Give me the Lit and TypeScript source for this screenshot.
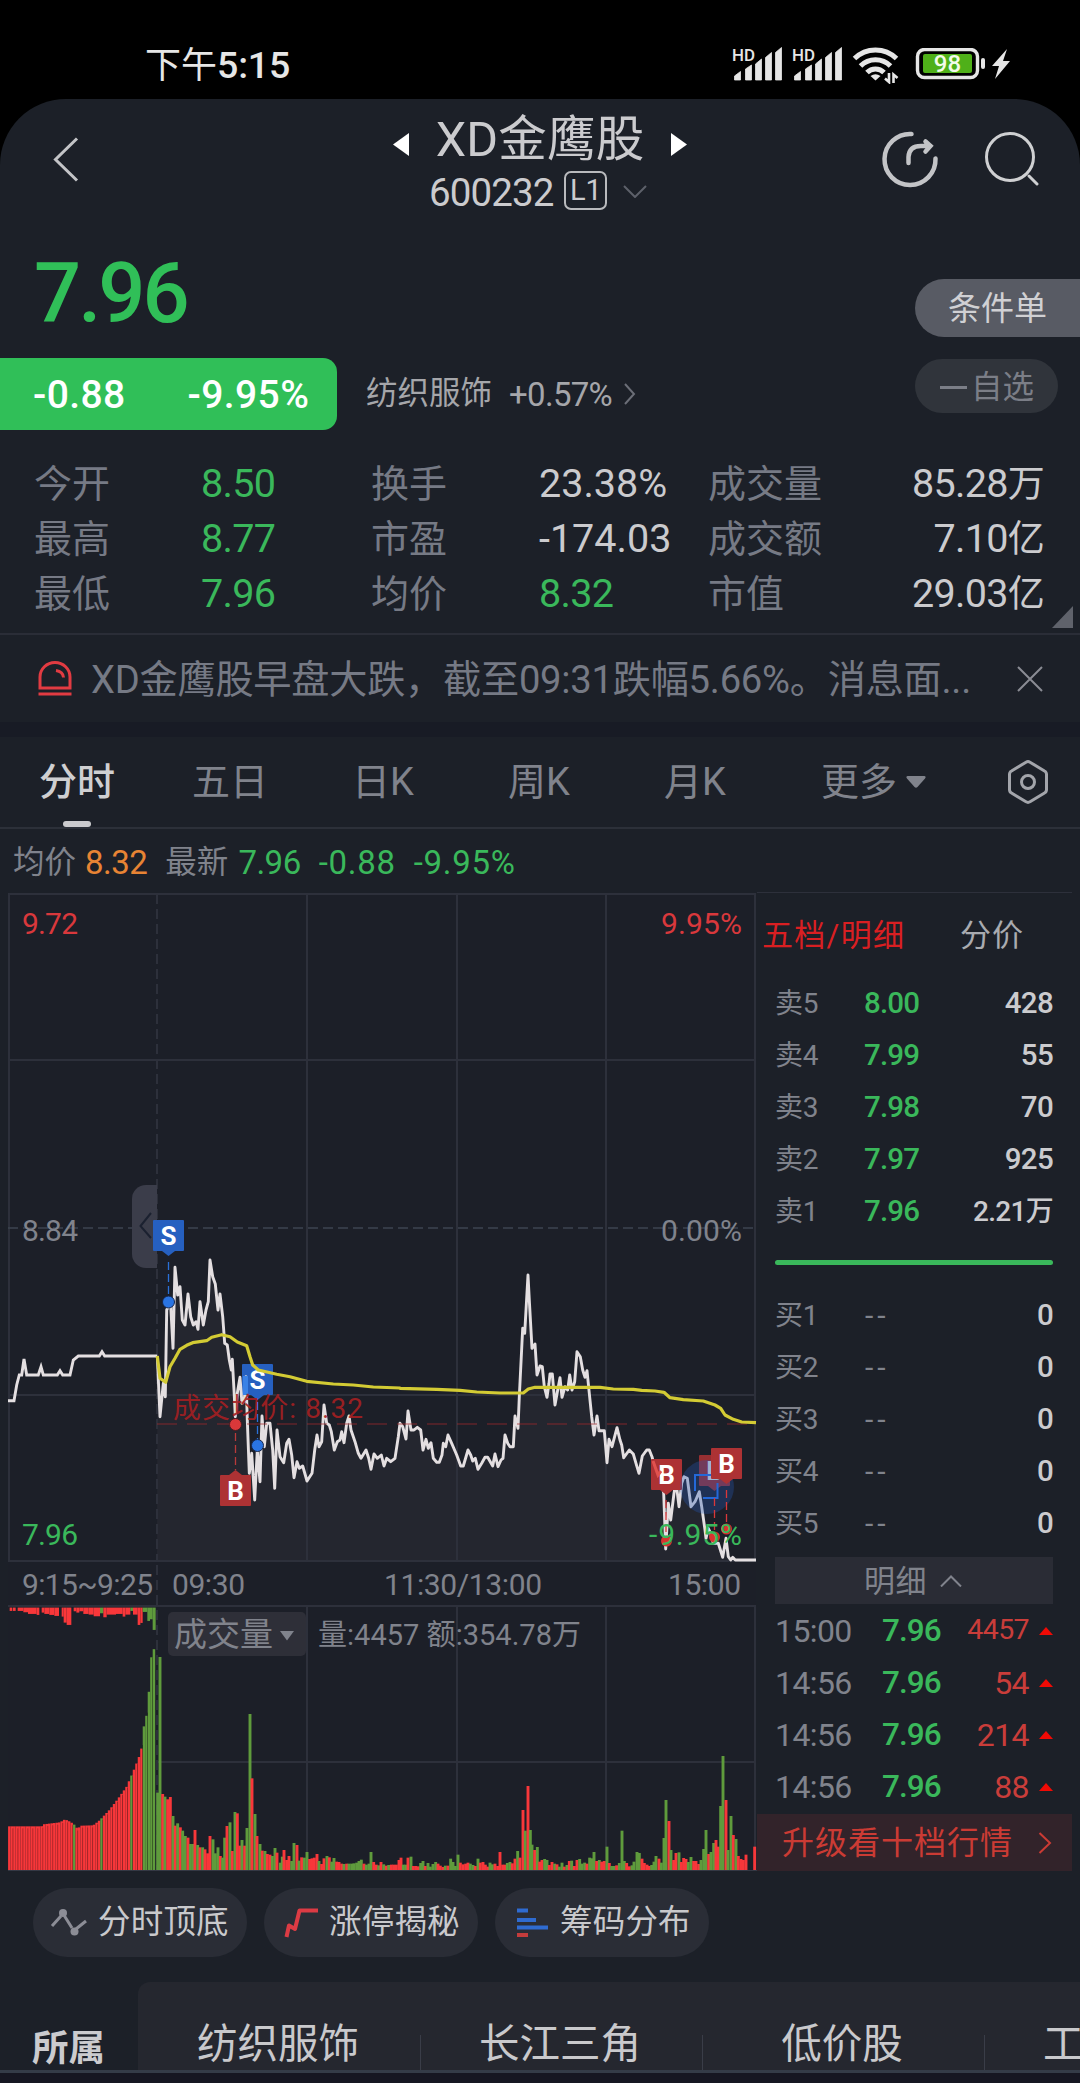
import { LitElement, html, svg, css } from "lit";
import { customElement, property } from "lit/decorators.js";

type Bar = { x: number; y: number; c: string };

const RED = "#f8373a";
const GREEN = "#5f9b3c";

// Traces are kept on a 3x grid; the second half starts at x = 1200.
const PRICE_A =
  "24,812 42,812 50,765 58,735 65,735 72,687 80,735 115,735 123,710 130,735 172,735 180,722 188,735 210,735 220,690 235,678 298,678 306,665 314,678 472,678";
const PRICE_B =
  "472,678 480,860 490,760 496,800 500,540 505,530 512,525 519,655 525,412 533,495 540,470 547,570 555,585 564,492 572,560 580,585 588,575 594,598 600,515 610,585 618,540 625,515 630,390 638,440 646,462 654,540 660,492 668,560 674,640 682,645 688,690 694,720 697,688 702,780 706,860 712,790 720,742 726,820 733,810 738,740 742,870 748,1030 755,970 764,1110 772,960 780,1055 786,858 793,950 800,880 810,880 818,960 824,1075 831,900 840,980 851,998 860,940 867,928 875,975 882,1043 891,995 898,1015 908,1008 921,1053 936,1030 944,960 951,915 957,950 965,935 972,825 980,880 988,885 994,905 1003,960 1012,935 1020,930 1025,905 1032,938 1040,880 1047,858 1053,900 1065,935 1075,970 1083,985 1098,960 1106,985 1113,1018 1122,972 1132,985 1144,975 1152,1008 1160,985 1172,995 1185,985 1195,920 1200,880";
const PRICE_C =
  "0,670 8,680 18,717 24,633 33,690 42,690 52,682 62,690 69,750 78,718 85,745 93,728 100,775 110,787 118,787 126,765 130,730 137,740 144,705 155,730 170,765 182,798 190,798 204,750 212,765 218,783 226,775 234,808 245,790 255,772 263,772 278,798 285,762 294,800 303,780 309,775 315,705 323,730 330,740 340,740 345,648 354,685 358,590 368,385 374,400 384,225 388,300 396,445 405,432 411,525 420,498 427,500 433,560 441,592 447,550 450,522 457,522 465,615 473,570 480,533 486,592 495,560 503,570 509,525 516,570 524,545 531,455 541,470 548,510 555,532 561,512 568,580 575,650 582,705 591,648 597,692 613,692 621,788 627,718 636,740 651,683 660,720 665,735 671,773 688,750 700,762 708,790 717,820 727,768 740,750 748,750 756,770 768,820 775,810 785,850 791,880 797,1047 805,910 812,960 822,880 828,845 837,920 845,850 852,830 862,835 873,920 885,905 898,875 905,920 915,990 918,1015 925,985 932,1000 940,1030 955,1030 968,1072 978,1015 985,1070 992,1080 998,1072 1006,1080 1068,1080";
const AVG_A =
  "472,678 480,745 497,757 510,710 525,685 540,658 560,646 578,638 620,632 635,622 665,614 690,620 712,636 740,647 750,680 758,705 775,720 830,733 870,740 920,754 1000,762 1060,765 1120,771 1200,774";
const AVG_B =
  "0,565 110,568 180,571 230,576 300,579 370,579 385,567 405,562 600,562 640,567 700,568 725,571 765,573 792,577 810,593 850,599 910,603 945,615 962,625 975,645 1000,658 1025,666 1068,668";

const toPoints = (s: string, ox: number, oy: number) =>
  s.split(" ").map((p) => {
    const [x, y] = p.split(",").map(Number);
    return [ox + x / 3, oy + y / 3];
  });
const join = (pts: number[][]) => pts.map(([x, y]) => `${x.toFixed(1)},${y.toFixed(1)}`).join(" ");

const auctionLine = join(toPoints(PRICE_A, 0, 1130));
const dayPts = [...toPoints(PRICE_B, 0, 1130), ...toPoints(PRICE_C, 400, 1200)];
const dayLine = join(dayPts);
const dayArea = `157,1560 ${dayLine} 756,1560`;
const avgLine = join([...toPoints(AVG_A, 0, 1130), ...toPoints(AVG_B, 400, 1200)]);

const VOL_A =
  "473g698 480g291 488r702 495g710 503r718 511r711 519g768 526r797 533g790 541r802 548g812 556g828 564r833 571g852 578g852 585r810 593g855 600r862 608g862 615r868 623r880 630r828 639g838 646g880 654g862 661r888 668g893 674g833 681r798 690g787 697r873 705g756 712r760 719r857 726g840 734r857 741g804 750g462 756r655 765g762 771r828 780g852 787r872 795g873 802r882 810r884 817g888 825g864 831r878 841g908 847g890 852r870 860r900 867r888 875g903 882g849 891r855 897g902 905r892 913g893 921g876 929r897 936r895 943r893 951r882 957g903 965r912 972r895 981g888 988r892 995g905 1002g894 1010r905 1017r906 1025r911 1032g912 1040r911 1047g911 1055g911 1062g910 1070g908 1077g903 1084g899 1092r911 1099g914 1107g911 1113g876 1121r906 1129r914 1136g916 1143r906 1151g913 1159r917 1166g915 1174r914 1181r914 1189r914 1197r900";
const VOL_B =
  "63r893 70g914 77g914 84r893 93g890 100r918 107r918 115r919 122g909 129g903 136r918 144g909 151g920 159g912 167g906 174r911 181r917 189r921 196g917 204r917 212g896 219g906 226g918 234g884 241r908 249r913 257r911 264r908 271g911 279g915 286r918 294g896 301r908 309r906 316r914 323r920 330g908 337g913 345r911 353r918 360r876 368r914 375r914 382g909 390g906 397r910 405r896 413g873 420r893 429r750 436g812 444r678 451g810 456g854 464r870 472g861 479r905 486r900 494g897 501g900 508r915 516r906 524g911 531r913 538g920 546g908 553r920 561g915 568r903 575g902 583r918 591r900 599g897 606g911 614g908 621r911 629g893 636g895 642g876 650r903 658g900 665r905 673r903 681g860 688r909 695g918 703g918 710r916 718g909 726g812 733g903 740r909 748r919 756g916 762g905 771g876 778g879 786r896 793r909 801r914 808r918 815g915 822g905 828g888 837r896 844g908 852g834 858g720 867r783 873g870 881r900 888r879 897g877 904r906 911r894 918r897 925g906 933g891 941r903 948r903 956r912 963g900 971g867 978g810 986r882 993g876 1001g849 1008r840 1015r860 1022g738 1029g588 1038r720 1044g870 1053g768 1060r825 1068g837 1075r888 1083r897 1090r900 1098r884 1124r860";

const parseBars = (s: string, ox: number): Bar[] =>
  s.split(" ").map((t) => {
    const m = /^(\d+)([rg])(\d+)$/.exec(t)!;
    return { x: ox + +m[1] / 3, y: 1560 + +m[3] / 3, c: m[2] === "r" ? RED : GREEN };
  });
const dayBars = [...parseBars(VOL_A, 0), ...parseBars(VOL_B, 380)];

// Call auction: matched volume rises toward the open.
const RISE = [
  [24, 799], [125, 799], [130, 793], [180, 787], [195, 778], [212, 786], [224, 795], [232, 806], [245, 797],
  [280, 796], [300, 780], [330, 748], [355, 715], [380, 680], [400, 634], [415, 597], [424, 570], [431, 502],
  [438, 480], [446, 408], [454, 293], [462, 267],
];
const riseAt = (x: number) => {
  for (let i = 1; i < RISE.length; i++) {
    const [x0, y0] = RISE[i - 1];
    const [x1, y1] = RISE[i];
    if (x <= x1) return y0 + ((y1 - y0) * (x - x0)) / (x1 - x0);
  }
  return 267;
};
const auctionBars: Bar[] = Array.from({ length: 59 }, (_, i) => {
  const x = 28 + i * 7.48;
  const green = x > 428 || [26, 37, 49].includes(i);
  return { x: x / 3, y: 1560 + riseAt(x) / 3, c: green ? GREEN : RED };
});
// Unmatched volume hangs from the top edge: start, end, depth, colour.
const HANG: [number, number, number, string][] = [
  [29, 37, 153, RED], [39, 47, 153, RED], [53, 70, 153, RED], [70, 84, 157, RED], [84, 110, 162, RED],
  [110, 118, 165, RED], [125, 133, 158, RED], [133, 148, 162, RED], [148, 163, 165, RED], [163, 177, 168, RED],
  [185, 191, 170, RED], [191, 200, 188, RED], [200, 214, 195, RED], [221, 229, 154, RED], [229, 238, 158, RED],
  [238, 250, 154, RED], [250, 266, 162, RED], [266, 281, 164, RED], [281, 300, 169, RED], [300, 310, 160, GREEN],
  [310, 320, 172, RED], [320, 348, 164, RED], [348, 368, 162, RED], [368, 376, 170, RED], [376, 391, 164, RED],
  [391, 399, 153, GREEN], [399, 413, 164, RED], [413, 421, 195, RED], [421, 428, 189, RED], [428, 442, 156, GREEN],
  [442, 450, 183, GREEN], [450, 458, 178, GREEN], [458, 467, 210, GREEN],
];

@customElement("quote-chart")
export class QuoteChart extends LitElement {
  static styles = css`
    :host { display: block; width: 757px; height: 979px; }
    svg { display: block; font-family: Roboto, "Noto Sans CJK SC", sans-serif; }
    .grid { stroke: #2d303b; stroke-width: 2; fill: none; }
    .lab { fill: #80838c; font-size: 30px; }
    .lab.kind { font-size: 33px; }
    .lab.sum { font-size: 29px; }
    .red { fill: #d9383c; }
    .green { fill: #3ab85b; }
    .tag { fill: #fff; font-size: 26px; font-weight: 700; text-anchor: middle; }
  `;

  private flag(x: number, y: number, letter: string, up = false) {
    const color = letter === "S" ? "#2660c0" : "#ad3234";
    return svg`
      <rect x=${x} y=${y} width="31" height="31" rx="1" fill=${color}></rect>
      <path d=${up ? `M${x + 9} ${y}l6.5 -5l6.5 5z` : `M${x + 9} ${y + 31}l6.5 5l6.5 -5z`} fill=${color}></path>
      <text class="tag" x=${x + 15.5} y=${y + 25}>${letter}</text>`;
  }

  private stem(x: number, y1: number, y2: number, color: string) {
    return svg`<path d="M${x} ${y1}V${y2}" stroke=${color} stroke-width="1.3" stroke-dasharray="8 4"></path>`;
  }

  render() {
    return html`<svg width="757" height="979" viewBox="0 892 757 979">
      <rect x="8" y="893" width="748" height="978" fill="#1c1f28"></rect>
      <polygon points=${dayArea} fill="#24262f"></polygon>
      <path class="grid" d="M8 894H756M8 1060H756M8 1395H756M8 1561H756M9 893V1561M307 893V1562M457 893V1562M606 893V1562M755 893V1561"></path>
      <path class="grid" d="M8 1606H756M157 1762H756M307 1606V1870M457 1606V1870M606 1606V1870M755 1606V1870"></path>
      <path class="grid" stroke-dasharray="10 5" d="M157 894V1562M157 1565V1870"></path>
      <path d="M8 1228H756" stroke="#3d4450" stroke-width="1.6" stroke-dasharray="10 5" fill="none"></path>
      <path d="M8 1870.5H757" stroke="#343844" stroke-width="1"></path>

      <path d="M157 1185H146a14 14 0 0 0 -14 14V1254a14 14 0 0 0 14 14H157z" fill="#3b3d4a"></path>
      <path d="M151 1213L140.500 1226L151 1238" fill="none" stroke="#1b2130" stroke-width="2"></path>

      <text class="lab red" x="22" y="934" textLength="56">9.72</text>
      <text class="lab red" x="661" y="934" textLength="81">9.95%</text>
      <text class="lab" x="22" y="1241" textLength="56">8.84</text>
      <text class="lab" x="661" y="1241" textLength="81">0.00%</text>
      <text class="lab green" x="22" y="1545" textLength="56">7.96</text>

      <polyline points=${auctionLine} fill="none" stroke="#e4dfe1" stroke-width="2.9"></polyline>
      ${this.flag(153, 1220, "S")}
      ${this.flag(242, 1364, "S")}
      <polyline points=${dayLine} fill="none" stroke="#e4dfe1" stroke-width="2.9" stroke-linejoin="round"></polyline>
      <rect x="243" y="1376" width="5" height="19" fill="#3b82e6"></rect>

      ${this.stem(168.5, 1262, 1298, "#2a70d8")}
      ${this.stem(257.5, 1402, 1440, "#2a70d8")}
      ${this.stem(235.5, 1433, 1470, "#b83a3a")}
      ${this.flag(220, 1475, "B", true)}
      <path d="M157 1424H756" stroke="#a3282c" stroke-opacity="0.5" stroke-width="1.6" stroke-dasharray="20 10"></path>
      <text x="173" y="1418" font-size="28" textLength="190" fill="#a51f22" fill-opacity="0.92">成交均价: 8.32</text>
      <polyline points=${avgLine} fill="none" stroke="#d3cb34" stroke-width="3.2" stroke-linejoin="round"></polyline>
      <circle cx="168.500" cy="1302" r="6" fill="#2a74e2" stroke="#15254a"></circle>
      <circle cx="257.500" cy="1445.500" r="6" fill="#2a74e2" stroke="#15254a"></circle>
      <circle cx="235.500" cy="1424.500" r="6" fill="#d9383a" stroke="#4a1a20"></circle>

      <g opacity="0.85">${this.flag(699, 1455, "B")}</g>
      ${this.flag(651, 1459, "B")}
      <path d="M653 1461l5 14l3 -4" stroke="#e0524f" stroke-width="3" fill="none"></path>
      <circle cx="707" cy="1487" r="27" fill="#2458b4" fill-opacity="0.32"></circle>
      ${this.flag(711, 1448, "B")}
      <path d="M695 1491V1475H711M703 1498H717.500V1483" fill="none" stroke="#2468d8" stroke-width="2"></path>
      ${this.stem(666, 1500, 1536, "#d9383a")}
      ${this.stem(714.5, 1498, 1532, "#d9383a")}
      ${this.stem(726.5, 1490, 1524, "#d9383a")}
      <circle cx="666.500" cy="1541" r="5.500" fill="#d9322f"></circle>
      <circle cx="714.500" cy="1537" r="5.500" fill="#d9322f"></circle>
      <circle cx="726.500" cy="1529" r="5.500" fill="#d9322f"></circle>
      <text class="lab green" x="649" y="1545" textLength="93">-9.95%</text>

      <text class="lab" x="22" y="1595" textLength="131">9:15~9:25</text>
      <text class="lab" x="172" y="1595" textLength="73">09:30</text>
      <text class="lab" x="384" y="1595" textLength="158">11:30/13:00</text>
      <text class="lab" x="668" y="1595" textLength="73">15:00</text>

      ${HANG.map(([a, b, d, c]) => svg`<rect x=${a / 3} y="1607.600" width=${(b - a) / 3} height=${(d - 143) / 3} fill=${c}></rect>`)}
      ${auctionBars.map((b) => svg`<rect x=${b.x - 1.25} y=${b.y} width="2.500" height=${1870 - b.y} fill=${b.c}></rect>`)}
      ${Array.from({ length: 29 }, (_, i) => svg`<rect x=${12.4 + i * 4.987} y=${1562 + riseAt(37.2 + i * 14.96) / 3} width="0.900" height="400" fill="#000" fill-opacity="0.3" clip-path="url(#base)"></rect>`)}
      <clipPath id="base"><rect x="0" y="1560" width="757" height="310"></rect></clipPath>
      ${dayBars.map((b) => svg`<rect x=${b.x - 1.45} y=${b.y} width="2.900" height=${1870 - b.y} fill=${b.c}></rect>`)}

      <rect x="168" y="1612" width="138" height="44" rx="5" fill="#2e2f38"></rect>
      <text class="lab kind" x="174" y="1646" textLength="99">成交量</text>
      <path d="M280 1631H294L287 1640.500z" fill="#80838c"></path>
      <text class="lab sum" x="318" y="1645" textLength="263">量:4457 额:354.78万</text>
    </svg>`;
  }
}

const ASKS = [["卖5", "8.00", "428"], ["卖4", "7.99", "55"], ["卖3", "7.98", "70"], ["卖2", "7.97", "925"], ["卖1", "7.96", "2.21万"]];
const TICKS = [["15:00", "7.96", "4457"], ["14:56", "7.96", "54"], ["14:56", "7.96", "214"], ["14:56", "7.96", "88"]];

@customElement("order-book")
export class OrderBook extends LitElement {
  static styles = css`
    :host { display: block; width: 315px; height: 978px; color: #80838c; font-size: 30px; line-height: 1; white-space: nowrap; }
    .tabs { display: flex; height: 84px; align-items: center; padding-left: 5px; font-size: 31px; box-sizing: border-box; }
    .on { color: #d91f22; width: 198px; letter-spacing: 1.3px; }
    .off { color: #a9abb0; letter-spacing: 1px; }
    .row { display: grid; grid-template-columns: 89px 1fr auto; height: 52px; align-items: center; padding: 1px 19px 0 18px; box-sizing: border-box; letter-spacing: -0.3px; }
    .row .k { font-size: 28px; }
    .up { color: #3ab85b; font-weight: 500; }
    .row .up { font-size: 29.500px; letter-spacing: -0.800px; }
    .none { letter-spacing: 4px; padding-left: 1px; }
    .q { color: #cbcbce; font-weight: 500; font-size: 29.500px; letter-spacing: -0.700px; }
    .q.zh { font-size: 28px; }
    .bar { height: 5px; border-radius: 3px; background: #3ab85b; margin: 23px 19px 24px 18px; }
    .head { display: flex; align-items: center; justify-content: center; gap: 13px; height: 47px; margin: 8px 19px 0 18px; background: #2a2c35; font-size: 31px; padding: 1px 2px 0 0; letter-spacing: 0.500px; box-sizing: border-box; }
    .tick { display: grid; grid-template-columns: 106px 1fr auto 14px; column-gap: 0; height: 52px; align-items: center; padding: 1px 19px 0 18px; box-sizing: border-box; font-size: 32px; letter-spacing: -0.6px; }
    .tick .up { font-size: 31.500px; letter-spacing: -0.900px; padding-left: 1px; }
    .tick .v { color: #c93d3a; padding-right: 10px; }
    .tick .v.long { font-size: 28.500px; }
    .tick svg { display: block; }
    .more { display: flex; align-items: center; justify-content: space-between; height: 57px; margin-top: 2px; padding: 0 20px 0 25px; background: #32232a; color: #cb3b34; font-size: 32px; letter-spacing: 1px; }
  `;

  render() {
    return html`
      <div class="tabs"><span class="on">五档/明细</span><span class="off">分价</span></div>
      ${ASKS.map(([k, p, q]) => html`<div class="row"><span class="k">${k}</span><span class="up">${p}</span><span class="q ${q.includes("万") ? "zh" : ""}">${q}</span></div>`)}
      <div class="bar"></div>
      ${[1, 2, 3, 4, 5].map((n) => html`<div class="row"><span class="k">买${n}</span><span class="none">--</span><span class="q">0</span></div>`)}
      <div class="head"><span>明细</span><svg width="22" height="12" fill="none" stroke="#80838c" stroke-width="2"><path d="M1 11.500L11 1.500L21 11.500"></path></svg></div>
      ${TICKS.map(([t, p, v]) => html`<div class="tick"><span>${t}</span><span class="up">${p}</span><span class="v ${v.length > 3 ? "long" : ""}">${v}</span><svg width="14" height="8"><path d="M0 8L7 0L14 8z" fill="#f00a05"></path></svg></div>`)}
      <div class="more"><span>升级看十档行情</span><svg width="14" height="22" fill="none" stroke="#cb3b34" stroke-width="2"><path d="M1.500 1L12 11L1.500 21"></path></svg></div>
    `;
  }
}

@customElement("signal-bars")
export class SignalBars extends LitElement {
  static styles = css`
    :host { display: block; }
    svg { display: block; }
    text { font: 500 17px Roboto, sans-serif; fill: #e6e6e6; }
  `;
  render() {
    return html`<svg width="50" height="36" fill="#e6e6e6">
      <text x="0" y="14.500" textLength="23" lengthAdjust="spacingAndGlyphs">HD</text>
      <path d="M2.500 30l6 -4.500V34H2.500zM13.500 23l6 -4V34H13.500zM23.500 18l6 -5V34H23.500zM33.500 11.500l6 -5V34H33.500zM43.500 6.500l6 -5V34H43.500z" stroke="#e6e6e6" stroke-width="0.800"></path>
    </svg>`;
  }
}

@customElement("tool-chip")
export class ToolChip extends LitElement {
  @property() label = "";
  static styles = css`
    :host { display: flex; box-sizing: border-box; width: 214px; height: 69px; border-radius: 35px; background: #2a2d36; align-items: center; padding-left: 17px; gap: 10px; color: #c9c9cc; font-size: 32.500px; white-space: nowrap; line-height: 1; letter-spacing: 0.200px; }
  `;
  render() {
    return html`<slot></slot><span>${this.label}</span>`;
  }
}

@customElement("app-root")
export class AppRoot extends LitElement {
  static styles = css`
    :host { display: block; width: 1080px; height: 2083px; overflow: hidden; background: #000; color: #cbcbce; font-family: Roboto, "Noto Sans CJK SC", sans-serif; line-height: 1; white-space: nowrap; }
    svg { display: block; flex: none; }
    .status { height: 99px; display: flex; align-items: flex-start; justify-content: space-between; padding: 46px 70px 0 145px; box-sizing: border-box; color: #e6e6e6; }
    .clock { font-size: 37.500px; font-weight: 500; margin-top: 1px; letter-spacing: -0.2px; }
    .clock b { font-weight: 400; font-size: 36px; letter-spacing: 0; }
    .radios { display: flex; align-items: flex-start; gap: 10px; }
    .batt { margin-top: 2px; margin-left: 1px; }
    .screen { height: 1971px; background: #1c2028; border-radius: 66px 66px 0 0; overflow: hidden; }
    .head { display: grid; grid-template-columns: 380px 1fr 380px; height: 136px; }
    .back { padding: 38px 0 0 53px; }
    .title { display: flex; flex-direction: column; align-items: center; }
    .name { display: flex; align-items: center; justify-content: center; gap: 27px; height: 46px; margin-top: 18px; font-size: 48.500px; letter-spacing: 0.2px; width: 320px; }
    .name svg { margin-top: 8px; }
    .code { display: flex; align-items: center; font-size: 38.500px; letter-spacing: -0.9px; height: 42px; margin-top: 9px; width: 222px; }
    .lvl { width: 43px; height: 39px; border: 2px solid #b9babd; border-radius: 7px; box-sizing: border-box; margin: -6px 16px 0 11px; font-size: 29px; display: flex; align-items: center; justify-content: center; letter-spacing: 0; }
    .code svg { margin-top: -4px; }
    .acts { display: flex; justify-content: flex-end; gap: 46px; padding: 31px 41px 0 0; }
    .quote { display: grid; grid-template-columns: 1fr 165px; height: 195px; }
    .last { font-size: 83px; font-weight: 500; letter-spacing: -3px; color: #30bf58; padding-left: 34px; height: 123px; display: flex; align-items: center; box-sizing: border-box; padding-top: 0; }
    .last span { margin-top: -6px; }
    .moves { display: flex; align-items: center; height: 72px; }
    .pill { width: 337px; height: 72px; box-sizing: border-box; border-radius: 0 14px 14px 0; background: #30bf58; color: #fff; font-size: 39px; font-weight: 500; letter-spacing: 0.400px; display: flex; align-items: center; padding: 3px 0 0 33px; gap: 62px; }
    .sector { display: flex; align-items: center; margin-left: 29px; font-size: 31.500px; color: #a5a6aa; }
    .sector b { font-weight: 400; font-size: 33px; margin: 1px 12px 0 17px; letter-spacing: -0.700px; }
    .side { display: flex; flex-direction: column; padding-top: 44px; gap: 22px; }
    .cond { height: 58px; border-radius: 29px 0 0 29px; background: #585b64; font-size: 33px; display: flex; align-items: center; padding-left: 33px; color: #d0d0d3; }
    .fav { width: 143px; height: 54px; border-radius: 27px; background: #30343b; color: #7b7e87; font-size: 31.500px; display: flex; align-items: center; box-sizing: border-box; padding: 3px 0 0 25px; gap: 4px; }
    .dash { width: 27px; height: 2.500px; background: #7b7e87; }
    .stats { height: 203px; box-sizing: border-box; padding: 26px 0 0 34px; display: grid; grid-template-columns: 167px 170px 168px 169px 130px 206px; grid-auto-rows: 55px; align-items: center; font-size: 39.500px; letter-spacing: -0.700px; position: relative; }
    .stats .k { color: #767a85; font-size: 38px; letter-spacing: 0; }
    .stats .m { letter-spacing: 0; }
    .stats .g { color: #3ab85b; }
    .stats .r { text-align: right; }
    .stats .r i { font-style: normal; font-size: 37px; }
    .fold { position: absolute; right: 7px; top: 176px; }
    .notice { height: 89px; border-top: 2px solid #2a2d37; display: flex; align-items: center; padding: 0 37px 0 38px; box-sizing: border-box; color: #767a85; font-size: 38.200px; }
    .msg { width: 927px; margin: 3px 0 0 19px; letter-spacing: -0.250px; }
    .band { height: 15px; background: #181b25; }
    .tabs { height: 92px; display: grid; grid-template-columns: 152px 160px 156px 156px 157px 187px 1fr; padding-left: 40px; border-bottom: 2px solid #2c3039; align-items: center; font-size: 38px; color: #80838c; box-sizing: border-box; }
    .tab { display: flex; align-items: center; gap: 9px; height: 90px; position: relative; }
    .tab.on { color: #cfcfd1; font-weight: 500; margin-left: -1px; }
    .tab.on::after { content: ""; position: absolute; left: 24px; bottom: 0; width: 28px; height: 6px; border-radius: 3px; background: #cbcbce; }
    .legend { height: 63px; display: flex; align-items: center; padding: 4px 0 0 13px; box-sizing: border-box; font-size: 33px; color: #80838c; letter-spacing: -0.500px; }
    .legend .k { font-size: 31.500px; letter-spacing: 0; }
    .legend .o { color: #e88434; margin: 0 18px 0 9px; }
    .legend .g { color: #3ab85b; margin-left: 10px; }
    .legend .w { margin-left: 18px; letter-spacing: 0.700px; }
    .market { display: flex; width: 1072px; height: 979px; }
    .right { border-top: 1px solid #2d303b; border-bottom: 1px solid #343844; height: 977px; }
    .chips { display: flex; gap: 17px; padding: 17px 0 0 33px; height: 111px; box-sizing: border-box; }
    .groups { display: flex; height: 88px; }
    .own { width: 138px; box-sizing: border-box; padding: 49px 0 0 32px; font-size: 36.500px; font-weight: 700; }
    .list { display: grid; grid-template-columns: repeat(4, 282px); width: 942px; overflow: hidden; background: #25272f; border-radius: 12px 0 0 0; }
    .cell { display: flex; justify-content: center; padding: 42px 2px 0 0; font-size: 40.500px; position: relative; color: #c9c9cc; }
    .cell + .cell::before { content: ""; position: absolute; left: 0; top: 53px; bottom: 0; width: 1px; background: #3a3d48; }
    .cell:last-child { justify-content: flex-start; padding-left: 59px; }
    .foot { height: 13px; background: #161722; border-top: 3px solid #343c48; box-sizing: border-box; }
  `;

  private status() {
    return html`<div class="status">
      <div class="clock"><b>下午</b>5:15</div>
      <div class="radios">
        <signal-bars></signal-bars>
        <signal-bars></signal-bars>
        <svg width="48" height="38" viewBox="0 0 48 38" fill="none" stroke="#e6e6e6" stroke-width="5">
          <path d="M2.500 12.500A30 30 0 0 1 44.500 12.500M8.500 20A21 21 0 0 1 38.500 20M15 26.500A12 12 0 0 1 32 26.500"></path>
          <path d="M23.500 34.500l-5 -4.500q5 -3.500 10 0z" fill="#e6e6e6" stroke="none"></path>
          <path d="M37 27V36L33 32.500M41.500 37V28.500L45.500 32" stroke-width="2.600"></path>
        </svg>
        <svg class="batt" width="99" height="32" viewBox="0 0 99 32">
          <rect x="6.500" y="1.500" width="60" height="28" rx="7" fill="none" stroke="#e6e6e6" stroke-width="3.400"></rect>
          <rect x="12" y="6" width="49" height="19" rx="2" fill="#4fb019"></rect>
          <rect x="70" y="10" width="4" height="11" rx="2" fill="#e6e6e6"></rect>
          <text x="36.500" y="24" font-family="Roboto, sans-serif" font-size="24" font-weight="500" fill="#f3fbea" text-anchor="middle">98</text>
          <path d="M96 1L81 18H88L84 31L99 13H92z" fill="#e6e6e6"></path>
        </svg>
      </div>
    </div>`;
  }

  private header() {
    return html`<div class="head">
      <div class="back"><svg width="26" height="46" fill="none" stroke="#c3c4c7" stroke-width="3"><path d="M24 1.500L2.500 22.500L24 43.500"></path></svg></div>
      <div class="title">
        <div class="name">
          <svg width="16" height="23"><path d="M16 0V23L0 11.500z" fill="#fff"></path></svg>
          <span>XD金鹰股</span>
          <svg width="16" height="23"><path d="M0 0V23L16 11.500z" fill="#fff"></path></svg>
        </div>
        <div class="code"><span>600232</span><span class="lvl">L1</span><svg width="24" height="13" fill="none" stroke="#5d606a" stroke-width="2"><path d="M1 1L12 12L23 1"></path></svg></div>
      </div>
      <div class="acts">
        <svg width="58" height="58" viewBox="0 0 58 58" fill="none" stroke="#c3c4c7" stroke-width="4.500" stroke-linecap="round">
          <path d="M30.500 4A25.500 25.500 0 1 0 54.500 28.500"></path>
          <path d="M27.500 33V27Q28 16 40 16H48M44.500 11.500L49.500 16L44.500 21.500"></path>
        </svg>
        <svg width="54" height="56" viewBox="0 0 54 56" fill="none" stroke="#cfd0d2" stroke-width="3" stroke-linecap="round">
          <circle cx="25" cy="27" r="23.500"></circle><path d="M44 46L52 54"></path>
        </svg>
      </div>
    </div>`;
  }

  private quote() {
    return html`<div class="quote">
      <div>
        <div class="last"><span>7.96</span></div>
        <div class="moves">
          <div class="pill"><span>-0.88</span><span>-9.95%</span></div>
          <div class="sector"><span>纺织服饰</span><b>+0.57%</b><svg width="12" height="22" fill="none" stroke="#6b6e77" stroke-width="2"><path d="M1 1L10 11L1 21"></path></svg></div>
        </div>
      </div>
      <div class="side"><div class="cond">条件单</div><div class="fav"><span class="dash"></span>自选</div></div>
    </div>
    <div class="stats">
      <span class="k">今开</span><span class="g">8.50</span><span class="k">换手</span><span class="m">23.38%</span><span class="k">成交量</span><span class="r">85.28<i>万</i></span>
      <span class="k">最高</span><span class="g">8.77</span><span class="k">市盈</span><span class="m">-174.03</span><span class="k">成交额</span><span class="r">7.10<i>亿</i></span>
      <span class="k">最低</span><span class="g">7.96</span><span class="k">均价</span><span class="g">8.32</span><span class="k">市值</span><span class="r">29.03<i>亿</i></span>
      <svg class="fold" width="21" height="22"><path d="M21 0V22H0z" fill="#5f626b"></path></svg>
    </div>`;
  }

  private tabs() {
    return html`<div class="tabs">
      <div class="tab on">分时</div><div class="tab">五日</div><div class="tab">日K</div><div class="tab">周K</div><div class="tab">月K</div>
      <div class="tab">更多<svg width="20" height="12"><path d="M1.500 0H18.500Q20.500 0.500 19 2.500L11.500 11Q10 12.500 8.500 11L1 2.500Q-0.500 0.500 1.500 0z" fill="#80838c"></path></svg></div>
      <svg width="44" height="46" viewBox="2 0 44 46" fill="none" stroke="#a3a5ab" stroke-width="3" stroke-linejoin="round">
        <path d="M20 3.200Q22 2 24 3.200L38.500 12Q40.500 13 40.500 15.500V30.500Q40.500 33 38.500 34L24 42.800Q22 44 20 42.800L5.500 34Q3.500 33 3.500 30.500V15.500Q3.500 13 5.500 12z"></path><circle cx="22" cy="23" r="6.500"></circle>
      </svg>
    </div>`;
  }

  render() {
    return html`
      ${this.status()}
      <div class="screen">
        ${this.header()} ${this.quote()}
        <div class="notice">
          <svg width="34" height="35" viewBox="0 0 34 35" fill="none" stroke="#e23b42" stroke-width="3">
            <path d="M2 27V16A14.500 14 0 0 1 32 16V27zM0.500 33H33.500M18 9.500Q25 10.500 25.500 16.500"></path>
          </svg>
          <span class="msg">XD金鹰股早盘大跌，截至09:31跌幅5.66%。消息面...</span>
          <svg width="26" height="26" fill="none" stroke="#8a8c94" stroke-width="2"><path d="M1 1L25 25M25 1L1 25"></path></svg>
        </div>
        <div class="band"></div>
        ${this.tabs()}
        <div class="legend">
          <span class="k">均价</span><span class="o">8.32</span><span class="k">最新</span><span class="g">7.96</span><span class="g w">-0.88</span><span class="g w">-9.95%</span>
        </div>
        <div class="market"><quote-chart></quote-chart><div class="right"><order-book></order-book></div></div>
        <div class="chips">
          <tool-chip label="分时顶底"><svg width="38" height="32" viewBox="0 0 38 32" fill="none" stroke="#8c8d96" stroke-width="3"><path d="M2 19L11 9M14.500 9L22 21M26 22L36 14"></path><circle cx="13" cy="6" r="4" fill="#8c8d96" stroke="none"></circle><circle cx="24.500" cy="24.500" r="4" fill="#8c8d96" stroke="none"></circle></svg></tool-chip>
          <tool-chip label="涨停揭秘"><svg width="38" height="32" viewBox="0 0 38 32" fill="none" stroke="#dc3b44" stroke-width="4" stroke-linejoin="round"><path d="M5.500 30L8 18.500L14 22L18.500 3.500H37"></path></svg></tool-chip>
          <tool-chip label="筹码分布"><svg width="38" height="32" viewBox="0 0 38 32"><path d="M5 3.500H16M5 13H24M5 20.500H36" stroke="#2f6bd0" stroke-width="4"></path><path d="M5 28H16" stroke="#c43c3c" stroke-width="4"></path></svg></tool-chip>
        </div>
        <div class="groups">
          <div class="own">所属</div>
          <div class="list"><div class="cell">纺织服饰</div><div class="cell">长江三角</div><div class="cell">低价股</div><div class="cell">工</div></div>
        </div>
      </div>
      <div class="foot"></div>
    `;
  }
}
